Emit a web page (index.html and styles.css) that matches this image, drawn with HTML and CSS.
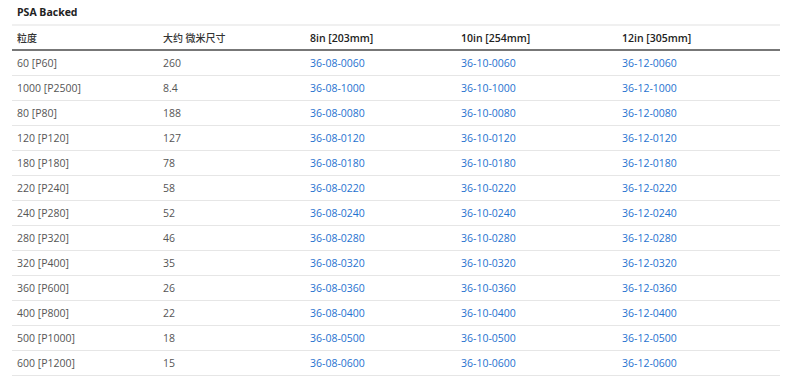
FILE: index.html
```html
<!DOCTYPE html>
<html lang="zh">

<head>
	<meta charset="UTF-8">
	<title>PSA Backed</title>
	<link rel="stylesheet" href="styles.css">
</head>

<body>
	<div class="spec">
		<h4 class="spec-title">PSA Backed</h4>
		<table class="spec-table">
			<colgroup>
				<col class="c1"><col class="c2"><col class="c3"><col class="c4"><col class="c5">
			</colgroup>
			<thead>
				<tr>
					<th class="cjk">粒度</th>
					<th class="cjk">大约 微米尺寸</th>
					<th>8in [203mm]</th>
					<th>10in [254mm]</th>
					<th>12in [305mm]</th>
				</tr>
			</thead>
			<tbody>
				<tr><td>60 [P60]</td><td>260</td><td><a href="#">36-08-0060</a></td><td><a href="#">36-10-0060</a></td><td><a href="#">36-12-0060</a></td></tr>
				<tr><td>1000 [P2500]</td><td>8.4</td><td><a href="#">36-08-1000</a></td><td><a href="#">36-10-1000</a></td><td><a href="#">36-12-1000</a></td></tr>
				<tr><td>80 [P80]</td><td>188</td><td><a href="#">36-08-0080</a></td><td><a href="#">36-10-0080</a></td><td><a href="#">36-12-0080</a></td></tr>
				<tr><td>120 [P120]</td><td>127</td><td><a href="#">36-08-0120</a></td><td><a href="#">36-10-0120</a></td><td><a href="#">36-12-0120</a></td></tr>
				<tr><td>180 [P180]</td><td>78</td><td><a href="#">36-08-0180</a></td><td><a href="#">36-10-0180</a></td><td><a href="#">36-12-0180</a></td></tr>
				<tr><td>220 [P240]</td><td>58</td><td><a href="#">36-08-0220</a></td><td><a href="#">36-10-0220</a></td><td><a href="#">36-12-0220</a></td></tr>
				<tr><td>240 [P280]</td><td>52</td><td><a href="#">36-08-0240</a></td><td><a href="#">36-10-0240</a></td><td><a href="#">36-12-0240</a></td></tr>
				<tr><td>280 [P320]</td><td>46</td><td><a href="#">36-08-0280</a></td><td><a href="#">36-10-0280</a></td><td><a href="#">36-12-0280</a></td></tr>
				<tr><td>320 [P400]</td><td>35</td><td><a href="#">36-08-0320</a></td><td><a href="#">36-10-0320</a></td><td><a href="#">36-12-0320</a></td></tr>
				<tr><td>360 [P600]</td><td>26</td><td><a href="#">36-08-0360</a></td><td><a href="#">36-10-0360</a></td><td><a href="#">36-12-0360</a></td></tr>
				<tr><td>400 [P800]</td><td>22</td><td><a href="#">36-08-0400</a></td><td><a href="#">36-10-0400</a></td><td><a href="#">36-12-0400</a></td></tr>
				<tr><td>500 [P1000]</td><td>18</td><td><a href="#">36-08-0500</a></td><td><a href="#">36-10-0500</a></td><td><a href="#">36-12-0500</a></td></tr>
				<tr><td>600 [P1200]</td><td>15</td><td><a href="#">36-08-0600</a></td><td><a href="#">36-10-0600</a></td><td><a href="#">36-12-0600</a></td></tr>
			</tbody>
		</table>
	</div>
</body>

</html>
```

FILE: styles.css
```css
body {
	margin: 0;
	padding: 0 10px 0 12px;
	font-family: 'Open Sans', 'Noto Sans CJK SC', sans-serif;
	font-size: 10.5px;
	color: #555;
	background-color: white;
}

.spec-title {
	margin: 0;
	padding: 4px 5px 0;
	height: 20px;
	font-size: 10.5px;
	font-weight: 700;
	color: #222;
	line-height: 16px;
}

.spec-table {
	width: 768px;
	border-collapse: collapse;
	table-layout: fixed;
	border-top: 2px solid #f0f0f0;
}

.c1 { width: 146px; }
.c2 { width: 147px; }
.c3 { width: 151px; }
.c4 { width: 161px; }
.c5 { width: 163px; }

.spec-table th {
	text-align: left;
	font-weight: 600;
	color: #222;
	height: 23px;
	padding: 0 5px;
	border-bottom: 2px solid #777;
}

.spec-table th.cjk {
	font-size: 10px;
	font-weight: 500;
	color: #333;
}

.spec-table td {
	height: 24px;
	padding: 0 5px;
	border-bottom: 1px solid #e6e6e6;
}

.spec-table a {
	color: #1f72d0;
	text-decoration: none;
}
```
